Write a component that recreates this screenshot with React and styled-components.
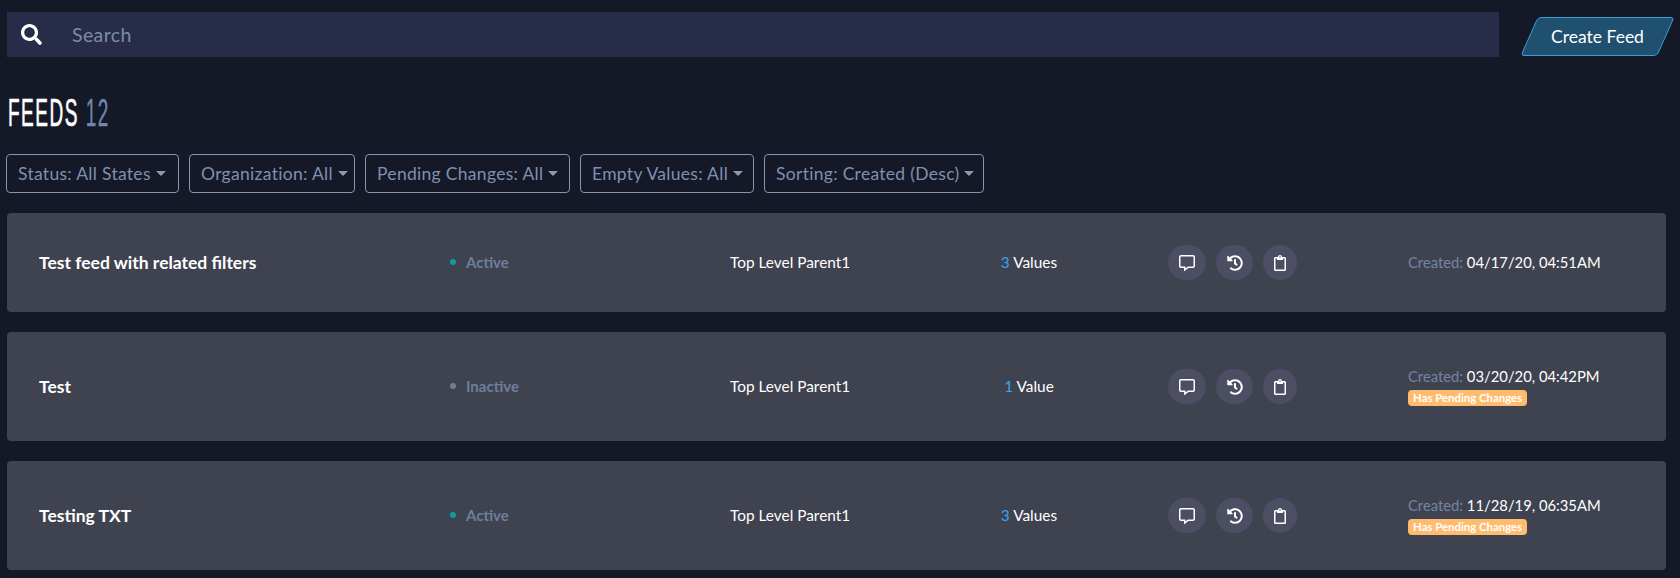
import React from "react";
import styled, { createGlobalStyle } from "styled-components";
import { FaSearch, FaRegCommentAlt, FaHistory, FaRegClipboard } from "react-icons/fa";

const GlobalStyle = createGlobalStyle`
  html, body {
    margin: 0;
    background: #141827;
    overflow: hidden;
  }
  * {
    box-sizing: border-box;
  }
`;

const Page = styled.div`
  padding: 12px 14px 0 7px;
  font-family: "Lato", "Open Sans", sans-serif;
  color: #fff;
`;

const TopBar = styled.div`
  display: flex;
  align-items: flex-start;
  gap: 22px;
`;

const SearchBar = styled.div`
  flex: 0 0 1492px;
  height: 45px;
  background: #272d49;
  display: flex;
  align-items: center;
  color: #fff;
  padding-left: 14px;
`;

const SearchText = styled.span`
  margin-left: 30px;
  padding-bottom: 1px;
  font-size: 19.5px;
  letter-spacing: 0.4px;
  color: #7c8cab;
`;

const CreateButton = styled.button`
  width: 137px;
  height: 39px;
  margin: 5px 0 0 8px;
  transform: skewX(-24deg);
  background: #20506f;
  border: 1px solid #3a9fd3;
  border-radius: 4px;
  padding: 0 0 1px;
  color: #fff;
  font-family: inherit;
  font-size: 17.5px;

  span {
    display: block;
    transform: skewX(24deg);
  }
`;

const Title = styled.h1`
  margin: 41px 0 0 1px;
  height: 30px;
  font-family: "Liberation Sans", sans-serif;
  font-weight: 400;
  font-size: 38px;
  line-height: 30px;
  letter-spacing: 3px;
  white-space: nowrap;
  color: #fff;
  -webkit-text-stroke: 0.7px #fff;
  transform: scaleX(0.5);
  transform-origin: left center;

  span {
    color: #6f86ad;
    -webkit-text-stroke: 0.4px #6f86ad;
  }
`;

const Filters = styled.div`
  display: flex;
  gap: 10px;
  margin: 26px 0 20px -1px;
`;

const Filter = styled.div`
  width: ${(p) => p.$w}px;
  height: 39px;
  display: flex;
  align-items: center;
  gap: 5px;
  padding-left: 11px;
  border: 1px solid #8495b3;
  border-radius: 4px;
  font-size: 17.5px;
  letter-spacing: 0.3px;
  white-space: nowrap;
  color: #7f90b0;

  &::after {
    content: "";
    border-top: 5px solid #8a9ab6;
    border-left: 5px solid transparent;
    border-right: 5px solid transparent;
  }
`;

const FeedList = styled.div`
  display: flex;
  flex-direction: column;
  gap: 20px;
`;

const Card = styled.div`
  height: ${(p) => (p.$tall ? 109 : 99)}px;
  background: #3f424f;
  border-radius: 4px;
  display: grid;
  grid-template-columns: 411px 280px 244px 194px 240px 1fr;
  align-items: center;
  padding-left: 32px;
`;

const FeedName = styled.div`
  padding-bottom: 1px;
  font-size: 17.5px;
  font-weight: 700;
`;

const Status = styled.div`
  display: flex;
  align-items: center;
  gap: 10px;
  padding-bottom: 1px;
  font-size: 15px;
  font-weight: 700;
  color: #6e7e9e;

  &::before {
    content: "";
    width: 6px;
    height: 6px;
    border-radius: 50%;
    background: ${(p) => (p.$active ? "#0a9f9f" : "#7a7d88")};
  }
`;

const Org = styled.div`
  padding-bottom: 1px;
  font-size: 15.4px;
`;

const ValueCount = styled.div`
  padding-bottom: 1px;
  padding-right: 84px;
  font-size: 15.4px;
  text-align: center;

  b {
    font-weight: 400;
    color: #35a7e8;
  }
`;

const Actions = styled.div`
  display: flex;
  gap: 10px;
`;

const IconButton = styled.div`
  height: 35px;
  width: ${(p) => p.$w}px;
  border-radius: 18px;
  background: #4c4f63;
  display: flex;
  align-items: center;
  justify-content: center;
  font-size: 16px;
  color: #fff;
`;

const Meta = styled.div`
  padding-bottom: 1px;
  font-size: 14.8px;
`;

const CreatedLabel = styled.span`
  color: #7485a5;
`;

const PendingBadge = styled.div`
  width: max-content;
  margin-top: 5px;
  padding: 0 5px;
  height: 16px;
  line-height: 16px;
  border-radius: 4px;
  background: #ffbc6e;
  font-size: 11.4px;
  font-weight: 700;
`;

const feeds = [
  { name: "Test feed with related filters", active: true, count: 3, created: "04/17/20, 04:51AM", pending: false },
  { name: "Test", active: false, count: 1, created: "03/20/20, 04:42PM", pending: true },
  { name: "Testing TXT", active: true, count: 3, created: "11/28/19, 06:35AM", pending: true },
];

const filters = [
  { label: "Status: All States", width: 173 },
  { label: "Organization: All", width: 166 },
  { label: "Pending Changes: All", width: 205 },
  { label: "Empty Values: All", width: 174 },
  { label: "Sorting: Created (Desc)", width: 220 },
];

export default function App() {
  return (
    <Page>
      <GlobalStyle />
      <TopBar>
        <SearchBar>
          <FaSearch size={21} />
          <SearchText>Search</SearchText>
        </SearchBar>
        <CreateButton>
          <span>Create Feed</span>
        </CreateButton>
      </TopBar>
      <Title>
        FEEDS <span>12</span>
      </Title>
      <Filters>
        {filters.map((f) => (
          <Filter key={f.label} $w={f.width}>
            {f.label}
          </Filter>
        ))}
      </Filters>
      <FeedList>
        {feeds.map((feed) => (
          <Card key={feed.name} $tall={feed.pending}>
            <FeedName>{feed.name}</FeedName>
            <Status $active={feed.active}>{feed.active ? "Active" : "Inactive"}</Status>
            <Org>Top Level Parent1</Org>
            <ValueCount>
              <b>{feed.count}</b> {feed.count === 1 ? "Value" : "Values"}
            </ValueCount>
            <Actions>
              <IconButton $w={38}>
                <FaRegCommentAlt />
              </IconButton>
              <IconButton $w={37}>
                <FaHistory />
              </IconButton>
              <IconButton $w={34}>
                <FaRegClipboard />
              </IconButton>
            </Actions>
            <Meta>
              <CreatedLabel>Created:</CreatedLabel> {feed.created}
              {feed.pending && <PendingBadge>Has Pending Changes</PendingBadge>}
            </Meta>
          </Card>
        ))}
      </FeedList>
    </Page>
  );
}
